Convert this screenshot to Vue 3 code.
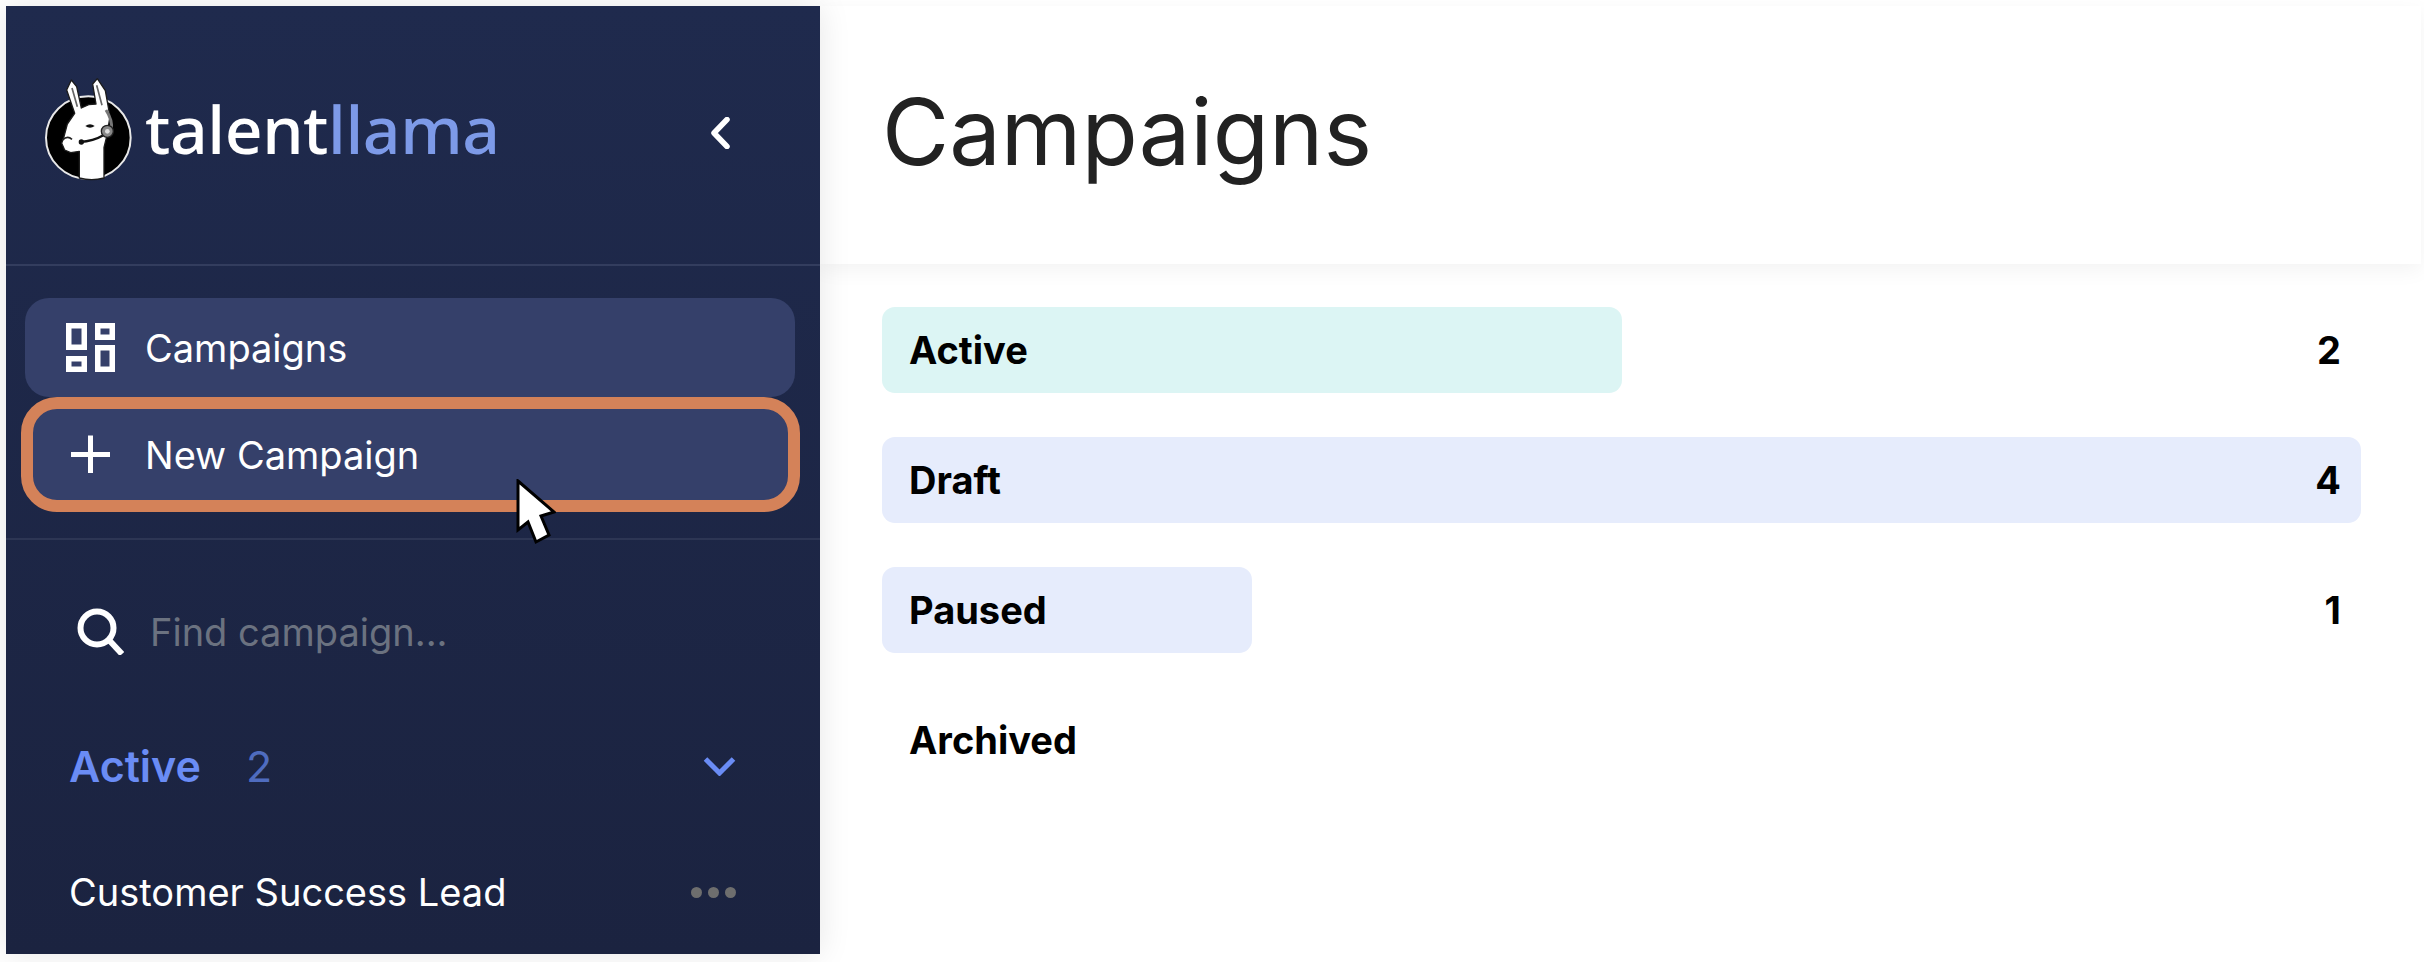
<script setup>
const rows = [
  { name: 'Active', count: 2, tone: 'teal' },
  { name: 'Draft', count: 4, tone: 'blue' },
  { name: 'Paused', count: 1, tone: 'blue' },
  { name: 'Archived', count: 0, tone: 'blue' },
]
const maxCount = 4
</script>

<template>
  <div class="page">
    <aside class="sidebar">
      <header class="brand">
        <svg class="logo" viewBox="0 0 360 390" aria-hidden="true">
          <ellipse cx="175" cy="233" rx="127" ry="124" fill="#000" stroke="#e8e8e8" stroke-width="6" />
          <path d="M148 354V274L122 278 104 270 95 250 102 230 112 192 134 160 110 90 124 60 140 80 154 144 176 134 198 132 188 72 202 56 226 92 240 170 230 230 222 262V354Q185 364 148 354Z" fill="#fff" stroke="#1c1c1c" stroke-width="4" stroke-linejoin="round" />
          <path d="M126 84L142 140M200 76L216 136" stroke="#666" stroke-width="5" fill="none" />
          <path d="M166 198Q180 188 194 198Q180 208 166 198Z" fill="#111" />
          <path d="M98 240Q112 226 126 238" stroke="#222" stroke-width="5" fill="none" />
          <path d="M150 246Q190 244 220 226" stroke="#111" stroke-width="7" fill="none" />
          <circle cx="154" cy="246" r="8" fill="#111" />
          <path d="M228 150Q248 180 244 208" stroke="#777" stroke-width="9" fill="none" />
          <circle cx="232" cy="214" r="18" fill="#888" stroke="#222" stroke-width="4" />
          <circle cx="232" cy="214" r="7" fill="#ddd" />
        </svg>
        <div class="wordmark">talent<span>llama</span></div>
        <svg class="collapse" viewBox="0 0 20 32" aria-hidden="true">
          <path d="M17 2.5L4 16 17 29.5" fill="none" stroke="#fff" stroke-width="5.5" stroke-linecap="round" stroke-linejoin="round" />
        </svg>
      </header>

      <nav class="nav">
        <a class="item">
          <svg class="item-icon" viewBox="0 0 49 49" aria-hidden="true">
            <g fill="none" stroke="#fff" stroke-width="5.5">
              <rect x="2.75" y="2.75" width="15.5" height="21.5" />
              <rect x="31.75" y="2.75" width="14.5" height="11.5" />
              <rect x="31.75" y="24.75" width="14.5" height="21.5" />
              <rect x="2.75" y="35.75" width="15.5" height="10.5" />
            </g>
          </svg>
          <span>Campaigns</span>
        </a>
        <a class="item item-marked">
          <svg class="item-icon plus" viewBox="0 0 49 49" aria-hidden="true">
            <path d="M24.5 5.5V43M5 24.5H44" stroke="#fff" stroke-width="5" fill="none" />
          </svg>
          <span>New Campaign</span>
        </a>
      </nav>

      <section class="lists">
        <div class="search">
          <svg class="search-icon" viewBox="0 0 47 47" aria-hidden="true">
            <circle cx="20" cy="20" r="16.5" fill="none" stroke="#fff" stroke-width="6" />
            <path d="M32 32L45 46" stroke="#fff" stroke-width="6" fill="none" />
          </svg>
          <span class="placeholder">Find campaign...</span>
        </div>
        <div class="group">
          <span class="group-name">Active</span>
          <span class="group-count">2</span>
          <svg class="group-chevron" viewBox="0 0 33 20" aria-hidden="true">
            <path d="M2.5 3L16.5 17 30.5 3" fill="none" stroke="#6a8cf5" stroke-width="5" />
          </svg>
        </div>
        <div class="campaign">
          <span>Customer Success Lead</span>
          <span class="dots"><i></i><i></i><i></i></span>
        </div>
      </section>

      <svg class="cursor" viewBox="0 0 40 66" aria-hidden="true">
        <path d="M2 2L38 33 25 37 33 56 20 63 12 43 2 51Z" fill="#fff" stroke="#000" stroke-width="3" stroke-linejoin="miter" />
      </svg>
    </aside>

    <main class="main">
      <header class="main-head">
        <h1>Campaigns</h1>
      </header>
      <div class="rows">
        <div v-for="row in rows" :key="row.name" class="row">
          <div class="fill" :class="row.tone" :style="{ width: (row.count / maxCount) * 100 + '%' }"></div>
          <span class="row-name">{{ row.name }}</span>
          <span v-if="row.count" class="row-count">{{ row.count }}</span>
        </div>
      </div>
    </main>
  </div>
</template>

<style>
html, body { margin: 0; background: #fff; }
</style>

<style scoped>
.page {
  box-sizing: border-box;
  width: 2424px;
  height: 962px;
  padding: 6px 3px 8px 6px;
  display: flex;
  font-family: Inter, "Liberation Sans", sans-serif;
  background: #fff;
  overflow: hidden;
}
.sidebar {
  position: relative;
  z-index: 2;
  flex: 0 0 814px;
  background: linear-gradient(#1f2a4d, #1b2340);
  box-shadow: 0 0 30px rgba(0, 0, 0, 0.1);
  color: #fff;
}
.brand {
  box-sizing: border-box;
  height: 260px;
  border-bottom: 2px solid #333d5e;
  display: flex;
  align-items: center;
  padding: 0 90px 0 24px;
}
.logo { width: 120px; height: 130px; flex: none; margin-top: -20px; }
.wordmark {
  margin-left: -5px;
  margin-top: -14px;
  font-family: "Noto Sans", sans-serif;
  font-size: 66px;
  font-weight: 500;
  letter-spacing: -0.4px;
  line-height: 1;
  color: #fff;
}
.wordmark span { color: #7d9ae8; }
.collapse { width: 20px; height: 32px; margin-left: auto; margin-top: -5px; }

.nav {
  padding: 32px 25px 26px 19px;
  border-bottom: 2px solid #2d3654;
}
.item {
  box-sizing: border-box;
  height: 99px;
  display: flex;
  align-items: center;
  padding-left: 41px;
  background: #35406a;
  border-radius: 24px;
  font-size: 38px;
  color: #fff;
}
.item-icon { width: 49px; height: 49px; flex: none; margin-right: 30px; }
.item-marked {
  height: 115px;
  margin: 0 -5px 0 -4px;
  padding-left: 33px;
  border: 12px solid #d48259;
  border-radius: 36px;
}

.lists { padding: 67px 84px 0 63px; }
.search { display: flex; align-items: center; height: 49px; padding-left: 8px; }
.search-icon { width: 47px; height: 47px; flex: none; margin-right: 26px; }
.placeholder { font-size: 38px; color: #6b7280; }
.group { display: flex; align-items: center; margin-top: 86px; height: 48px; }
.group-name { font-size: 43px; font-weight: 600; color: #6a8cf5; }
.group-count { font-size: 43px; color: #4f6cbf; margin-left: 45px; }
.group-chevron { width: 33px; height: 20px; margin-left: auto; }
.campaign {
  display: flex;
  align-items: center;
  justify-content: space-between;
  margin-top: 80px;
  height: 44px;
  font-size: 38px;
  color: #fff;
}
.dots { display: flex; gap: 6px; }
.dots i { width: 11px; height: 11px; border-radius: 50%; background: #6e6e6e; }
.cursor { position: absolute; left: 510px; top: 473px; width: 40px; height: 66px; }

.main { flex: 1; display: flex; flex-direction: column; min-width: 0; }
.main-head {
  box-sizing: border-box;
  height: 258px;
  padding-left: 62px;
  display: flex;
  align-items: center;
  box-shadow: 0 6px 20px rgba(0, 0, 0, 0.05);
}
h1 { margin: -6px 0 0; font-size: 92px; font-weight: 400; color: #222; line-height: 1; }
.rows { padding: 43px 60px 0 62px; display: flex; flex-direction: column; gap: 44px; }
.row {
  position: relative;
  box-sizing: border-box;
  height: 86px;
  padding: 0 20px 0 27px;
  display: flex;
  align-items: center;
  justify-content: space-between;
  font-size: 38px;
  font-weight: 700;
  color: #000;
}
.fill { position: absolute; left: 0; top: 0; bottom: 0; border-radius: 13px; }
.fill.teal { background: #dcf5f4; }
.fill.blue { background: #e6ecfc; }
.row-name, .row-count { position: relative; }
</style>
